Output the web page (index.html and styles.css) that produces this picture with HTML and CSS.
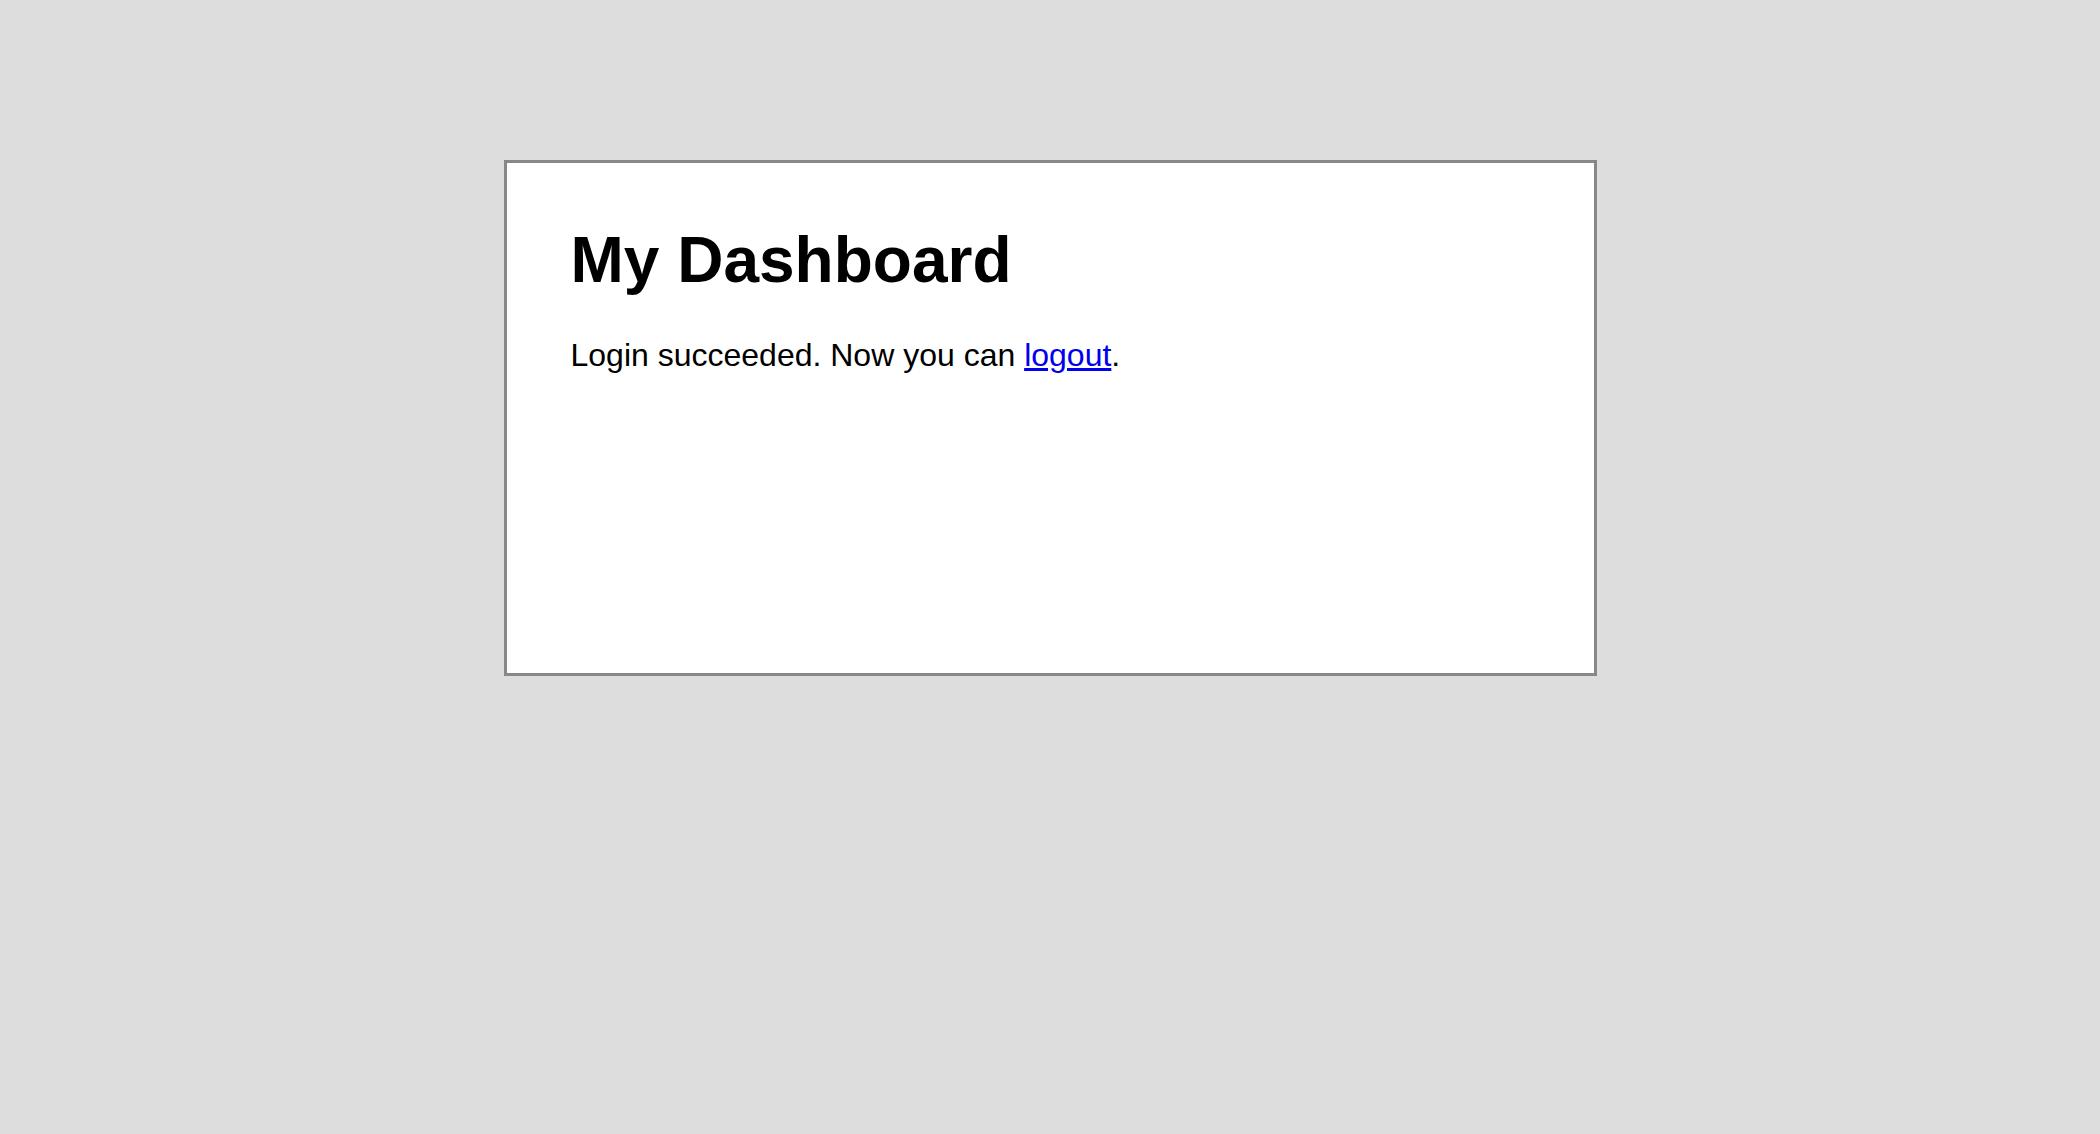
FILE: index.html
```html
<!DOCTYPE html>
<html lang="en">
<head>
<meta charset="utf-8">
<title>My Dashboard</title>
<link rel="stylesheet" href="styles.css">
</head>
<body>
<main class="card">
  <h1 class="title">My Dashboard</h1>
  <p class="message">Login succeeded. Now you can <a class="link" href="#">logout</a>.</p>
</main>
</body>
</html>
```

FILE: styles.css
```css
html, body {
  margin: 0;
  padding: 0;
}
body {
  background: #dddddd;
  font-family: "Liberation Sans", Arial, Helvetica, sans-serif;
  color: #000;
  padding-top: 160px;
}
.card {
  box-sizing: border-box;
  width: 1093px;
  height: 516px;
  margin: 0 auto;
  background: #ffffff;
  border: 3px solid #888888;
  padding: 60px 64px;
}
.title {
  margin: 0;
  font-size: 64px;
  font-weight: bold;
  line-height: normal;
}
.message {
  margin: 40px 0 0;
  font-size: 32px;
  line-height: normal;
}
.link {
  color: #0000ee;
  text-decoration: underline;
}
```
